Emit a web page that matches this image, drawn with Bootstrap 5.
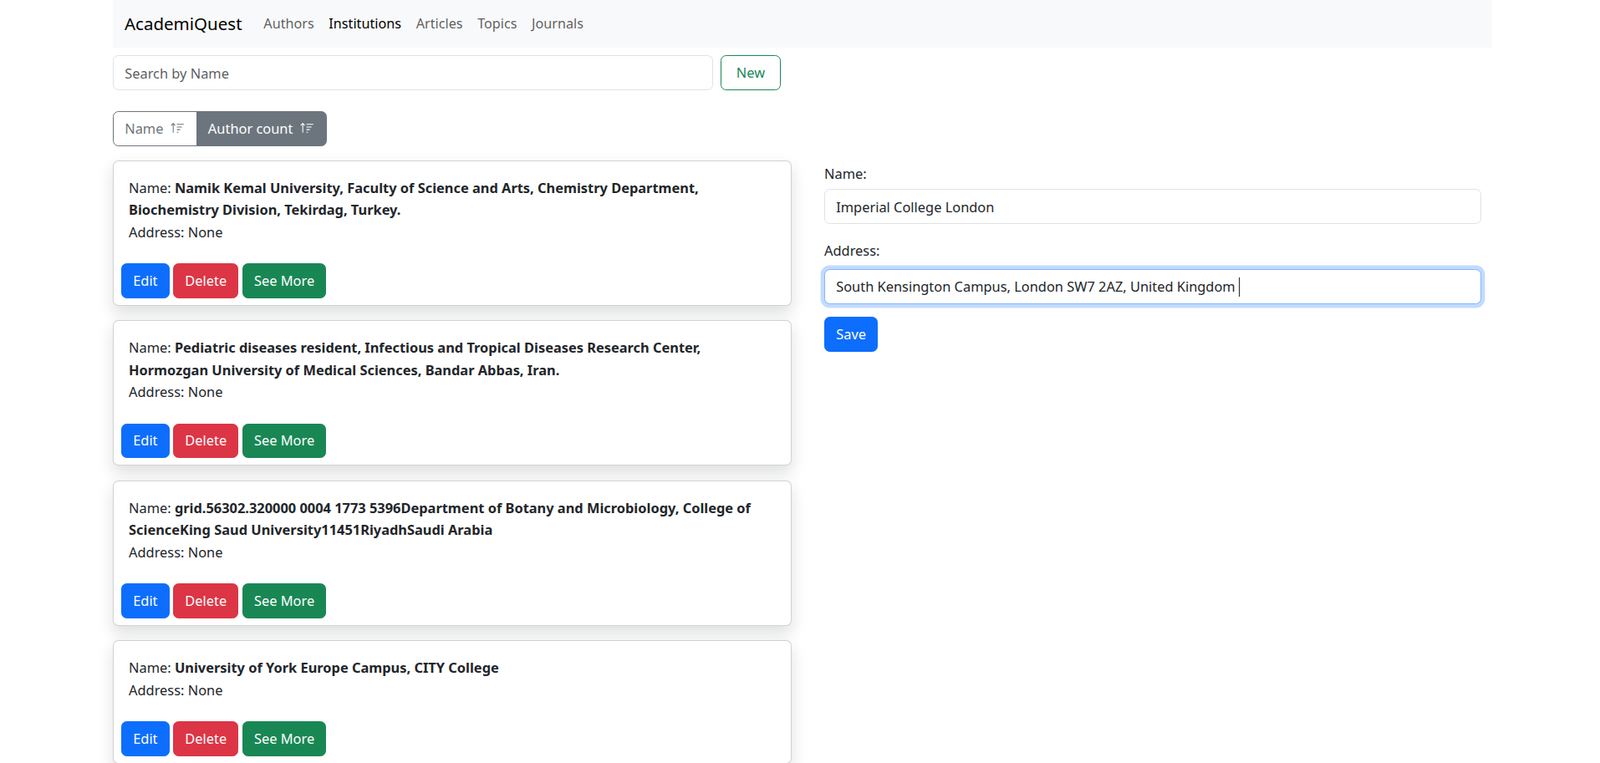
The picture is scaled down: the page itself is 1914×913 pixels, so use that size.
<!DOCTYPE html>
<html lang="en">
<head>
    <meta charset="UTF-8">
    <meta name="viewport" content="width=device-width, initial-scale=1.0">
    <title>AcademiQuest</title>
    <link href="https://cdn.jsdelivr.net/npm/bootstrap@5.3.0/dist/css/bootstrap.min.css" rel="stylesheet">
    <style>
        html { font-size: 17.6px; }
        body {
            font-family: "Noto Sans", sans-serif;
            font-size: 16.4px;
            line-height: 26.4px;
            overflow: hidden;
            height: 913px;
        }
        .btn, .form-control, .form-label { font-size: 16.4px; line-height: 26.4px; }
        .page-wrap { width: 1650px; margin-left: 135px; }
        .top-nav { height: 57px; padding: 0 14px; }
        .top-nav .navbar-brand { font-size: 20.5px; margin-right: 17px; }
        .top-nav .nav-link { padding: 8px; font-size: 16.2px; }
        .search-row { width: 800px; padding-top: 9px; }
        .search-input { width: 718px; height: 42px; }
        .new-btn { padding-left: 18px; padding-right: 18px; }
        .sort-icon { width: 17px; height: 17px; margin-left: 4px; vertical-align: -2px; }
        .sort-row { margin: 25px 0 17px; }
        .sort-row .btn { height: 42px; padding-right: 14px; padding-top: 7px; }
        .inst-card { width: 812px; margin-bottom: 17.6px; }
        .inst-body { padding: 19px 18px 24px; }
        .inst-actions { padding: 0 9px 8px; }
        .edit-col { width: 786px; margin-left: 39px; padding-top: 3px; }
        .edit-col .form-control { height: 42px; }
        .name-group { margin-bottom: 19px; }
        .name-group .form-label { margin-bottom: 5px; }
        .address-wrap { position: relative; margin-bottom: 15.6px; }
        .address-wrap .form-label { margin-bottom: 8px; }
        .caret-line { position: absolute; left: 496px; bottom: 9px; width: 1px; height: 23px; background: #212529; }
    </style>
</head>
<body>
    <div class="page-wrap">
        <nav class="navbar navbar-expand-lg navbar-light bg-light top-nav">
            <a class="navbar-brand" href="#">AcademiQuest</a>
            <ul class="navbar-nav flex-row">
                <li class="nav-item"><a class="nav-link" href="#">Authors</a></li>
                <li class="nav-item"><a class="nav-link active" href="#">Institutions</a></li>
                <li class="nav-item"><a class="nav-link" href="#">Articles</a></li>
                <li class="nav-item"><a class="nav-link" href="#">Topics</a></li>
                <li class="nav-item"><a class="nav-link" href="#">Journals</a></li>
            </ul>
        </nav>

        <div class="d-flex gap-2 search-row">
            <input type="text" class="form-control search-input" placeholder="Search by Name">
            <button type="button" class="btn btn-outline-success new-btn">New</button>
        </div>

        <div class="btn-group sort-row d-inline-flex">
            <button type="button" class="btn btn-outline-secondary">Name
                <svg class="sort-icon" viewBox="0 0 16 16" fill="currentColor"><path d="M3.5 12.5a.5.5 0 0 1-1 0V3.707L1.354 4.854a.5.5 0 1 1-.708-.708l2-1.999.007-.007a.498.498 0 0 1 .7.006l2 2a.5.5 0 1 1-.707.708L3.5 3.707V12.5zm3.5-9a.5.5 0 0 1 .5-.5h7a.5.5 0 0 1 0 1h-7a.5.5 0 0 1-.5-.5zM7.5 6a.5.5 0 0 0 0 1h5a.5.5 0 0 0 0-1h-5zm0 3a.5.5 0 0 0 0 1h3a.5.5 0 0 0 0-1h-3zm0 3a.5.5 0 0 0 0 1h1a.5.5 0 0 0 0-1h-1z"/></svg>
            </button>
            <button type="button" class="btn btn-secondary">Author count
                <svg class="sort-icon" viewBox="0 0 16 16" fill="currentColor"><path d="M3.5 12.5a.5.5 0 0 1-1 0V3.707L1.354 4.854a.5.5 0 1 1-.708-.708l2-1.999.007-.007a.498.498 0 0 1 .7.006l2 2a.5.5 0 1 1-.707.708L3.5 3.707V12.5zm3.5-9a.5.5 0 0 1 .5-.5h7a.5.5 0 0 1 0 1h-7a.5.5 0 0 1-.5-.5zM7.5 6a.5.5 0 0 0 0 1h5a.5.5 0 0 0 0-1h-5zm0 3a.5.5 0 0 0 0 1h3a.5.5 0 0 0 0-1h-3zm0 3a.5.5 0 0 0 0 1h1a.5.5 0 0 0 0-1h-1z"/></svg>
            </button>
        </div>

        <div class="d-flex align-items-start">
            <div>
                <div class="card shadow inst-card">
                    <div class="inst-body">
                        <div>Name: <strong>Namik Kemal University, Faculty of Science and Arts, Chemistry Department, Biochemistry Division, Tekirdag, Turkey.</strong></div>
                        <div>Address: None</div>
                    </div>
                    <div class="inst-actions d-flex gap-1">
                        <button type="button" class="btn btn-primary">Edit</button>
                        <button type="button" class="btn btn-danger">Delete</button>
                        <button type="button" class="btn btn-success">See More</button>
                    </div>
                </div>
                <div class="card shadow inst-card">
                    <div class="inst-body">
                        <div>Name: <strong>Pediatric diseases resident, Infectious and Tropical Diseases Research Center, Hormozgan University of Medical Sciences, Bandar Abbas, Iran.</strong></div>
                        <div>Address: None</div>
                    </div>
                    <div class="inst-actions d-flex gap-1">
                        <button type="button" class="btn btn-primary">Edit</button>
                        <button type="button" class="btn btn-danger">Delete</button>
                        <button type="button" class="btn btn-success">See More</button>
                    </div>
                </div>
                <div class="card shadow inst-card">
                    <div class="inst-body">
                        <div>Name: <strong>grid.56302.320000 0004 1773 5396Department of Botany and Microbiology, College of ScienceKing Saud University11451RiyadhSaudi Arabia</strong></div>
                        <div>Address: None</div>
                    </div>
                    <div class="inst-actions d-flex gap-1">
                        <button type="button" class="btn btn-primary">Edit</button>
                        <button type="button" class="btn btn-danger">Delete</button>
                        <button type="button" class="btn btn-success">See More</button>
                    </div>
                </div>
                <div class="card shadow inst-card">
                    <div class="inst-body">
                        <div>Name: <strong>University of York Europe Campus, CITY College</strong></div>
                        <div>Address: None</div>
                    </div>
                    <div class="inst-actions d-flex gap-1">
                        <button type="button" class="btn btn-primary">Edit</button>
                        <button type="button" class="btn btn-danger">Delete</button>
                        <button type="button" class="btn btn-success">See More</button>
                    </div>
                </div>
            </div>

            <form class="edit-col">
                <div class="name-group">
                    <label class="form-label" for="instName">Name:</label>
                    <input type="text" class="form-control" id="instName" value="Imperial College London">
                </div>
                <div class="address-wrap">
                    <label class="form-label" for="instAddress">Address:</label>
                    <input type="text" class="form-control" id="instAddress" value="South Kensington Campus, London SW7 2AZ, United Kingdom" autofocus>
                    <span class="caret-line"></span>
                </div>
                <button type="button" class="btn btn-primary">Save</button>
            </form>
        </div>
    </div>
    <script src="https://cdn.jsdelivr.net/npm/bootstrap@5.3.0/dist/js/bootstrap.bundle.min.js"></script>
</body>
</html>
